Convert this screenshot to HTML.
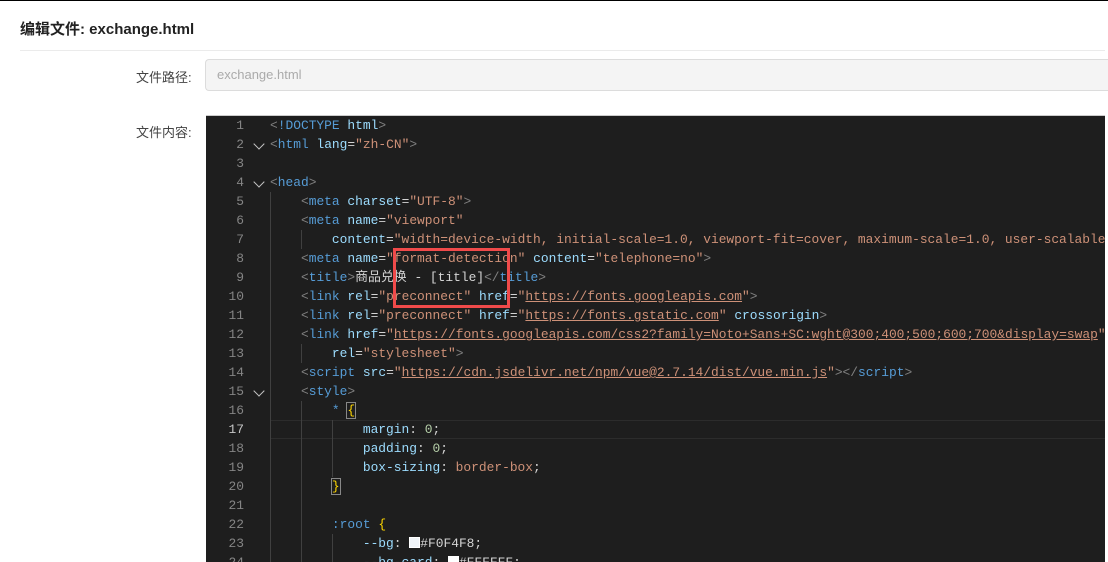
<!DOCTYPE html>
<html><head><meta charset="utf-8"><style>
*{margin:0;padding:0;box-sizing:border-box}
html,body{width:1108px;height:562px;overflow:hidden}
body{background:#fff;font-family:"Liberation Sans","Noto Sans CJK SC",sans-serif;position:relative;border-top:1px solid #000}
.title{position:absolute;left:20px;top:17px;font-size:15px;color:#222;font-weight:bold}
.hr{position:absolute;left:20px;right:3px;top:49px;height:1px;background:#ebebeb}
.lbl{position:absolute;left:136px;font-size:13px;color:#444}
.inp{position:absolute;left:205px;top:58px;width:903px;height:32px;background:#f4f4f4;border:1px solid #dcdcdc;border-right:none;border-radius:4px 0 0 4px;font-size:13px;color:#aaa;padding:7px 11px}
.ed{position:absolute;left:206px;top:114px;width:899px;height:448px;background:#1e1e1e;overflow:hidden;border-top:1px solid #ccc}
.ln{position:absolute;left:0;width:38px;text-align:right;color:#858585;font-family:"Liberation Mono",monospace;font-size:12.9px;line-height:19px}
.code{position:absolute;left:64px;top:0;white-space:pre;font-family:"Liberation Mono","Noto Sans CJK SC",monospace;font-size:12.9px;line-height:19px;color:#d4d4d4}
.b{color:#808080}.t{color:#569cd6}.a{color:#9cdcfe}.s{color:#ce9178}.u{color:#ce9178;text-decoration:underline}.y{color:#ffd700}.n{color:#b5cea8}
.chev{position:absolute;left:49px;width:8px;height:8px;border-right:1.5px solid #c5c5c5;border-bottom:1.5px solid #c5c5c5;transform:rotate(45deg)}
.g{position:absolute;width:1px;background:#404040}
.cur{position:absolute;left:64px;right:0;top:304px;height:19px;border-top:1px solid #2c2c2c;border-bottom:1px solid #2c2c2c}
.box{position:absolute;left:393px;top:247px;width:117px;height:60px;border:3px solid #f04a4a}
</style></head><body>
<div class="title">编辑文件: exchange.html</div>
<div class="hr"></div>
<div class="lbl" style="top:66px">文件路径:</div>
<div class="inp">exchange.html</div>
<div class="lbl" style="top:121px">文件内容:</div>
<div class="ed">
<div class="cur"></div>
<div class="ln" style="top:0">1<br>2<br>3<br>4<br>5<br>6<br>7<br>8<br>9<br>10<br>11<br>12<br>13<br>14<br>15<br>16<br><span style="color:#c6c6c6">17</span><br>18<br>19<br>20<br>21<br>22<br>23<br>24</div>
<div class="chev" style="top:24px"></div><div class="chev" style="top:62px"></div><div class="chev" style="top:271px"></div>
<div class="g" style="left:64px;top:76px;height:372px"></div>
<div class="g" style="left:95px;top:114px;height:19px"></div>
<div class="g" style="left:95px;top:228px;height:19px"></div>
<div class="g" style="left:95px;top:285px;height:163px"></div>
<div class="g" style="left:126px;top:304px;height:57px"></div>
<div class="g" style="left:126px;top:418px;height:30px"></div>
<div class="code"><span class="b">&lt;</span><span class="t">!DOCTYPE</span> <span class="a">html</span><span class="b">&gt;</span>
<span class="b">&lt;</span><span class="t">html</span> <span class="a">lang</span>=<span class="s">"zh-CN"</span><span class="b">&gt;</span>

<span class="b">&lt;</span><span class="t">head</span><span class="b">&gt;</span>
    <span class="b">&lt;</span><span class="t">meta</span> <span class="a">charset</span>=<span class="s">"UTF-8"</span><span class="b">&gt;</span>
    <span class="b">&lt;</span><span class="t">meta</span> <span class="a">name</span>=<span class="s">"viewport"</span>
        <span class="a">content</span>=<span class="s">"width=device-width, initial-scale=1.0, viewport-fit=cover, maximum-scale=1.0, user-scalable=</span>
    <span class="b">&lt;</span><span class="t">meta</span> <span class="a">name</span>=<span class="s">"format-detection"</span> <span class="a">content</span>=<span class="s">"telephone=no"</span><span class="b">&gt;</span>
    <span class="b">&lt;</span><span class="t">title</span><span class="b">&gt;</span>商品兑换 - [title]<span class="b">&lt;/</span><span class="t">title</span><span class="b">&gt;</span>
    <span class="b">&lt;</span><span class="t">link</span> <span class="a">rel</span>=<span class="s">"preconnect"</span> <span class="a">href</span>=<span class="s">"</span><span class="u">https://fonts.googleapis.com</span><span class="s">"</span><span class="b">&gt;</span>
    <span class="b">&lt;</span><span class="t">link</span> <span class="a">rel</span>=<span class="s">"preconnect"</span> <span class="a">href</span>=<span class="s">"</span><span class="u">https://fonts.gstatic.com</span><span class="s">"</span> <span class="a">crossorigin</span><span class="b">&gt;</span>
    <span class="b">&lt;</span><span class="t">link</span> <span class="a">href</span>=<span class="s">"</span><span class="u">https://fonts.googleapis.com/css2?family=Noto+Sans+SC:wght@300;400;500;600;700&amp;display=swap</span><span class="s">"</span>
        <span class="a">rel</span>=<span class="s">"stylesheet"</span><span class="b">&gt;</span>
    <span class="b">&lt;</span><span class="t">script</span> <span class="a">src</span>=<span class="s">"</span><span class="u">https://cdn.jsdelivr.net/npm/vue@2.7.14/dist/vue.min.js</span><span class="s">"</span><span class="b">&gt;&lt;/</span><span class="t">script</span><span class="b">&gt;</span>
    <span class="b">&lt;</span><span class="t">style</span><span class="b">&gt;</span>
        <span class="t">*</span> <span class="y" style="outline:1px solid #888">{</span>
            <span class="a">margin</span>: <span class="n">0</span>;
            <span class="a">padding</span>: <span class="n">0</span>;
            <span class="a">box-sizing</span>: <span class="s">border-box</span>;
        <span class="y" style="outline:1px solid #888">}</span>

        <span class="t">:root</span> <span class="y">{</span>
            <span class="a">--bg</span>: <span style="display:inline-block;width:11px;height:11px;background:#F0F4F8;border:1px solid #fff;vertical-align:-1px"></span>#F0F4F8;
            <span class="a">--bg-card</span>: <span style="display:inline-block;width:11px;height:11px;background:#fff;vertical-align:-1px"></span>#FFFFFF;</div>
</div>
<div class="box"></div>
</body></html>
